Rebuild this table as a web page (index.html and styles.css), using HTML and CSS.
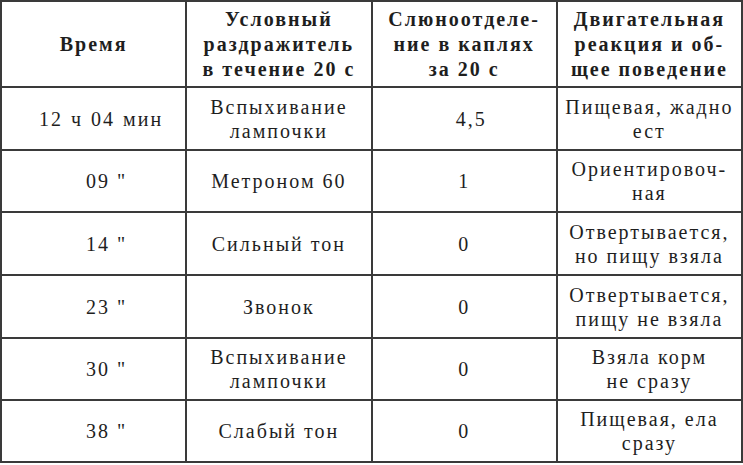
FILE: index.html
```html
<!DOCTYPE html>
<html lang="ru">
<head>
<meta charset="utf-8">
<link rel="stylesheet" href="styles.css">
</head>
<body>
<div class="table">
  <div class="cell head">Время</div>
  <div class="cell head">Условный<br>раздражитель<br>в течение 20 с</div>
  <div class="cell head">Слюноотделе-<br>ние в каплях<br>за 20 с</div>
  <div class="cell head">Двигательная<br>реакция и об-<br>щее поведение</div>

  <div class="cell time first">12 ч 04 мин</div>
  <div class="cell">Вспыхивание<br>лампочки</div>
  <div class="cell num decimal">4,5</div>
  <div class="cell">Пищевая, жадно<br>ест</div>

  <div class="cell time">09 "</div>
  <div class="cell">Метроном 60</div>
  <div class="cell num">1</div>
  <div class="cell">Ориентировоч-<br>ная</div>

  <div class="cell time">14 "</div>
  <div class="cell">Сильный тон</div>
  <div class="cell num">0</div>
  <div class="cell">Отвертывается,<br>но пищу взяла</div>

  <div class="cell time">23 "</div>
  <div class="cell">Звонок</div>
  <div class="cell num">0</div>
  <div class="cell">Отвертывается,<br>пищу не взяла</div>

  <div class="cell time">30 "</div>
  <div class="cell">Вспыхивание<br>лампочки</div>
  <div class="cell num">0</div>
  <div class="cell">Взяла корм<br>не сразу</div>

  <div class="cell time">38 "</div>
  <div class="cell">Слабый тон</div>
  <div class="cell num">0</div>
  <div class="cell">Пищевая, ела<br>сразу</div>
</div>
</body>
</html>
```

FILE: styles.css
```css
html, body {
  margin: 0;
  padding: 0;
  background: #ffffff;
}

.table {
  width: 743px;
  height: 463px;
  box-sizing: border-box;
  display: grid;
  grid-template-columns: repeat(4, 1fr);
  grid-template-rows: 86px 63px 62px 63px 63px 62px 62px;
  border-top: 2px solid #3a3a3a;
  border-left: 2px solid #3a3a3a;
  font-family: "Liberation Serif", "Times New Roman", serif;
  font-size: 20px;
  line-height: 24px;
  letter-spacing: 2px;
  color: #1e1e1e;
}

.cell {
  border-right: 2px solid #3a3a3a;
  border-bottom: 2px solid #3a3a3a;
  display: flex;
  align-items: center;
  justify-content: center;
  text-align: center;
  white-space: nowrap;
}

.head {
  font-weight: bold;
  line-height: 25px;
  letter-spacing: 2px;
}

.time {
  justify-content: flex-start;
  padding-left: 84px;
}

.time.first {
  padding-left: 37px;
  word-spacing: 1px;
}

.num.decimal {
  padding-left: 14px;
}
```
